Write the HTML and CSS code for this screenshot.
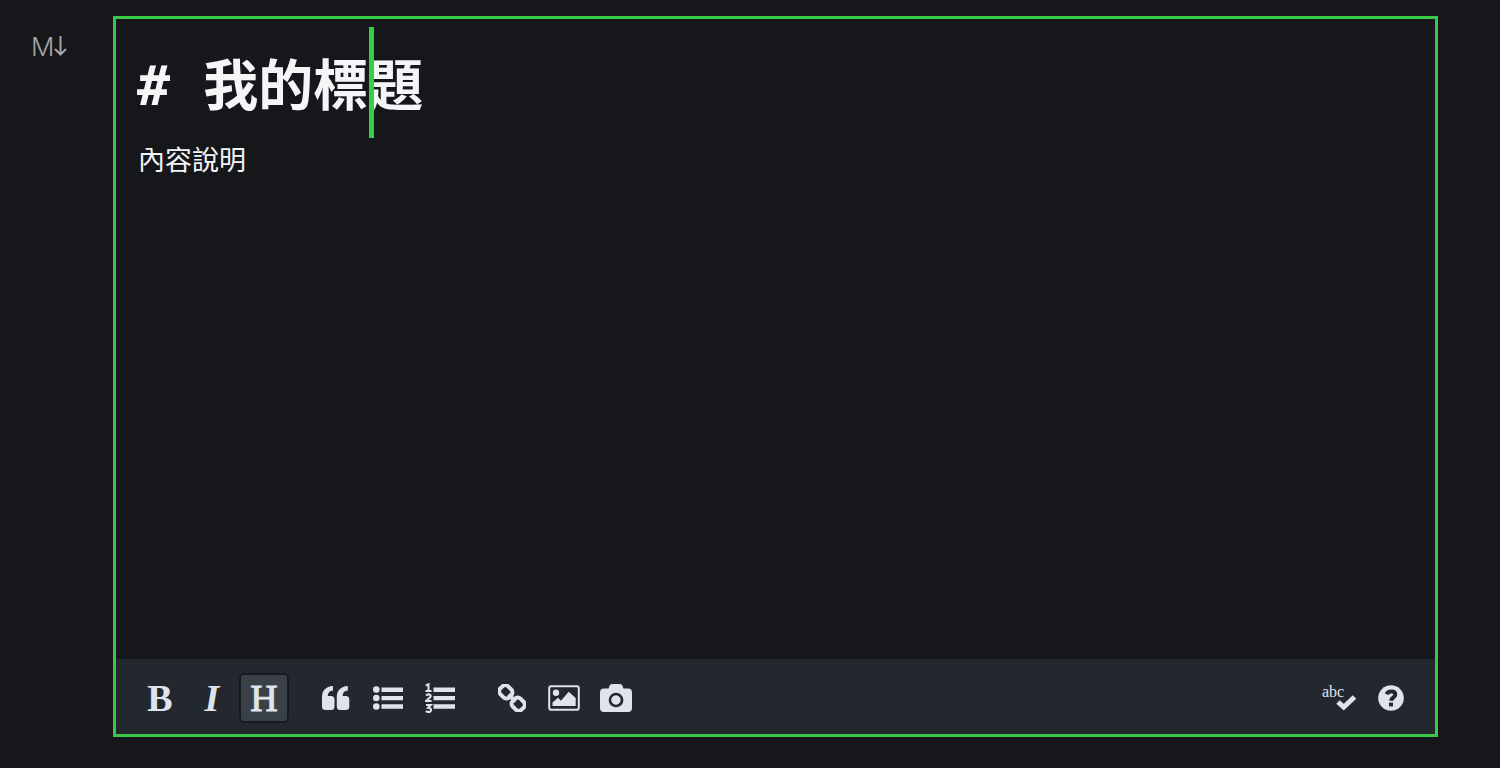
FILE: index.html
```html
<!DOCTYPE html>
<html lang="zh-Hant">
<head>
  <meta charset="UTF-8">
  <meta name="viewport" content="width=device-width, initial-scale=1.0">
  <title>Markdown Editor</title>
  <link rel="stylesheet" href="styles.css">
</head>
<body>

  <div class="cell">
    <div class="cell-type">
      <span>M</span>
      <svg width="13" height="20" viewBox="0 0 13 20"><path d="M6.500 0V18M1 13l5.500 5.500L12 13"/></svg>
    </div>

    <main class="editor">
      <div class="editor-text" contenteditable="true" role="textbox" aria-multiline="true" aria-label="Markdown" spellcheck="false">
        <h1># 我的標<span class="caret"></span>題</h1>
        <p>內容說明</p>
      </div>

      <div class="toolbar">
        <div class="group">
          <button type="button" class="letter bold" aria-label="Bold">B</button>
          <button type="button" class="letter italic" aria-label="Italic">I</button>
          <button type="button" class="letter active" aria-label="Heading">H</button>
        </div>

        <div class="group">
          <button type="button" aria-label="Quote">
            <svg width="28" height="24" viewBox="0 0 28 24"><path d="M11 0v4.500C7.500 4.800 6 6.500 5.800 10H9q3.500 0 3.500 3.500v7Q12.500 24 9 24H3.500Q0 24 0 20.500V11C0 4.500 4 .5 11 0zM25.800 0v4.500c-3.500.3-5 2-5.200 5.500h3.200q3.500 0 3.500 3.500v7q0 3.500-3.500 3.500h-5.500q-3.500 0-3.500-3.500V11c0-6.500 4-10.500 11-11z"/></svg>
          </button>
          <button type="button" aria-label="Bulleted list">
            <svg width="30" height="24" viewBox="0 0 30 24"><circle cx="3.300" cy="3.500" r="3.300"/><circle cx="3.300" cy="12" r="3.300"/><circle cx="3.300" cy="20.500" r="3.300"/><path d="M8.500 1.500H30v4.400H8.500zM8.500 9.900H30v4.400H8.500zM8.500 18.300H30v4.400H8.500z"/></svg>
          </button>
          <button type="button" aria-label="Numbered list">
            <svg width="30" height="30" viewBox="0 0 30 30"><path d="M8.500 4.500H30v4.400H8.500zM8.500 12.900H30v4.400H8.500zM8.500 21.300H30v4.400H8.500z"/><path class="line" d="M.8 2.500 3.500 1.300V8M.5 8h6M1 12.500q2.500-2 4.300-.5c1.500 1.800-1.500 3.500-4.300 6h5.500M1 22h4.800L3.200 24.700c4 0 3.500 4.300.2 4.300Q2 29 .7 28.200"/></svg>
          </button>
        </div>

        <div class="group">
          <button type="button" aria-label="Link">
            <svg width="28" height="28" viewBox="0 0 28 28"><g class="chain" transform="rotate(45 14 14)"><rect x="-1" y="8.500" width="12.500" height="11" rx="4"/><rect x="16.500" y="8.500" width="12.500" height="11" rx="4"/><path d="M9 14h10"/></g></svg>
          </button>
          <button type="button" aria-label="Image">
            <svg width="32" height="26" viewBox="0 0 32 26"><rect class="frame" x="1.200" y="1.200" width="29.600" height="23.600" rx="2"/><circle cx="8" cy="7.700" r="3.200"/><path d="M4.500 21v-3.500l5.500-4.700 3 3 7.700-9 7 6.200v8z"/></svg>
          </button>
          <button type="button" aria-label="Camera">
            <svg width="32" height="28" viewBox="0 0 32 28"><path fill-rule="evenodd" d="M4 4.500h4.500l1.200-3Q10.200 0 12 0h8q1.800 0 2.300 1.500l1.200 3H28q4 0 4 4V24q0 4-4 4H4q-4 0-4-4V8.500q0-4 4-4zM16 8.700a7.300 7.300 0 1 0 .1 0zM16 11.300a4.700 4.700 0 1 1-.1 0z"/></svg>
          </button>
        </div>

        <div class="group tools">
          <button type="button" class="spell" aria-label="Spell check">
            <span class="abc">abc</span>
            <svg width="22" height="17" viewBox="0 0 22 17"><path class="check" d="M3 8l5.700 5.200L19.500 3"/></svg>
          </button>
          <button type="button" aria-label="Help">
            <svg width="26" height="26" viewBox="0 0 26 26"><circle cx="13" cy="13" r="12.800"/><path class="question" d="M8.700 9.300C10 5.800 17.300 5.500 17.300 9.600c0 3.200-4 3-4.300 6.200"/><path class="dot" d="M11 17.600h4v3.800h-4z"/></svg>
          </button>
        </div>
      </div>
    </main>
  </div>

</body>
</html>
```

FILE: styles.css
```css
* {
  box-sizing: border-box;
}

body {
  margin: 0;
  background: #16171b;
  color: #f4f5f7;
  font-family: "Noto Sans CJK TC", sans-serif;
}

.cell {
  display: grid;
  grid-template-columns: 113px 1fr;
  min-height: 100vh;
  padding: 16px 62px 31px 0;
}

.cell-type {
  display: flex;
  align-items: center;
  align-self: start;
  height: 32px;
  margin-top: 14px;
  padding-left: 31px;
  color: #a3a5a8;
  font-family: Inter, sans-serif;
  font-size: 26px;
  font-weight: 300;
}

.cell-type svg {
  fill: none;
  stroke: currentColor;
  stroke-width: 2;
}

.editor {
  display: flex;
  flex-direction: column;
  min-width: 0;
  border: 3px solid #37c845;
}

.editor-text {
  flex: 1;
  padding: 12px 21px;
  outline: none;
}

.editor-text h1 {
  margin: 0;
  font-family: "DejaVu Sans Mono", "Noto Sans CJK TC", monospace;
  font-size: 55px;
  font-weight: 700;
  line-height: 110px;
}

.editor-text p {
  margin: 0;
  padding-left: 1px;
  font-size: 27px;
  line-height: 36px;
}

.caret {
  position: relative;
}

.caret::after {
  content: "";
  position: absolute;
  bottom: -20px;
  left: 1px;
  width: 5px;
  height: 111px;
  background: #32d043;
}

.toolbar {
  display: flex;
  align-items: center;
  gap: 20px;
  height: 75px;
  padding: 3px 18px 0;
  background: #23282f;
}

.group {
  display: flex;
}

.tools {
  margin-left: auto;
}

.toolbar button {
  display: flex;
  align-items: center;
  justify-content: center;
  width: 52px;
  height: 50px;
  padding: 0;
  border: 0;
  background: none;
  color: #dfe4ec;
  cursor: pointer;
}

.toolbar svg {
  fill: currentColor;
}

.toolbar .letter {
  font-family: "Liberation Serif", serif;
  font-size: 38px;
  line-height: 50px;
}

.toolbar .bold {
  font-weight: 700;
}

.toolbar .italic {
  font-style: italic;
  font-weight: 700;
}

.toolbar .active {
  width: 50px;
  margin: 0 1px;
  border: 2px solid #16191e;
  border-radius: 5px;
  background: #3a4047;
  -webkit-text-stroke: 1px currentColor;
}

.toolbar .line {
  fill: none;
  stroke: currentColor;
  stroke-width: 2;
}

.toolbar .chain {
  fill: none;
  stroke: currentColor;
  stroke-width: 4;
}

.toolbar .frame {
  fill: none;
  stroke: currentColor;
  stroke-width: 2;
}

.toolbar .check {
  fill: none;
  stroke: currentColor;
  stroke-width: 5;
}

.toolbar .question {
  fill: none;
  stroke: #23282f;
  stroke-width: 4;
}

.toolbar .dot {
  fill: #23282f;
}

.toolbar .spell {
  position: relative;
}

.spell .abc {
  position: absolute;
  top: 9px;
  left: 9px;
  font-family: "Liberation Serif", serif;
  font-size: 16px;
  line-height: 20px;
}

.spell svg {
  margin: 8px 0 0 14px;
}
```
